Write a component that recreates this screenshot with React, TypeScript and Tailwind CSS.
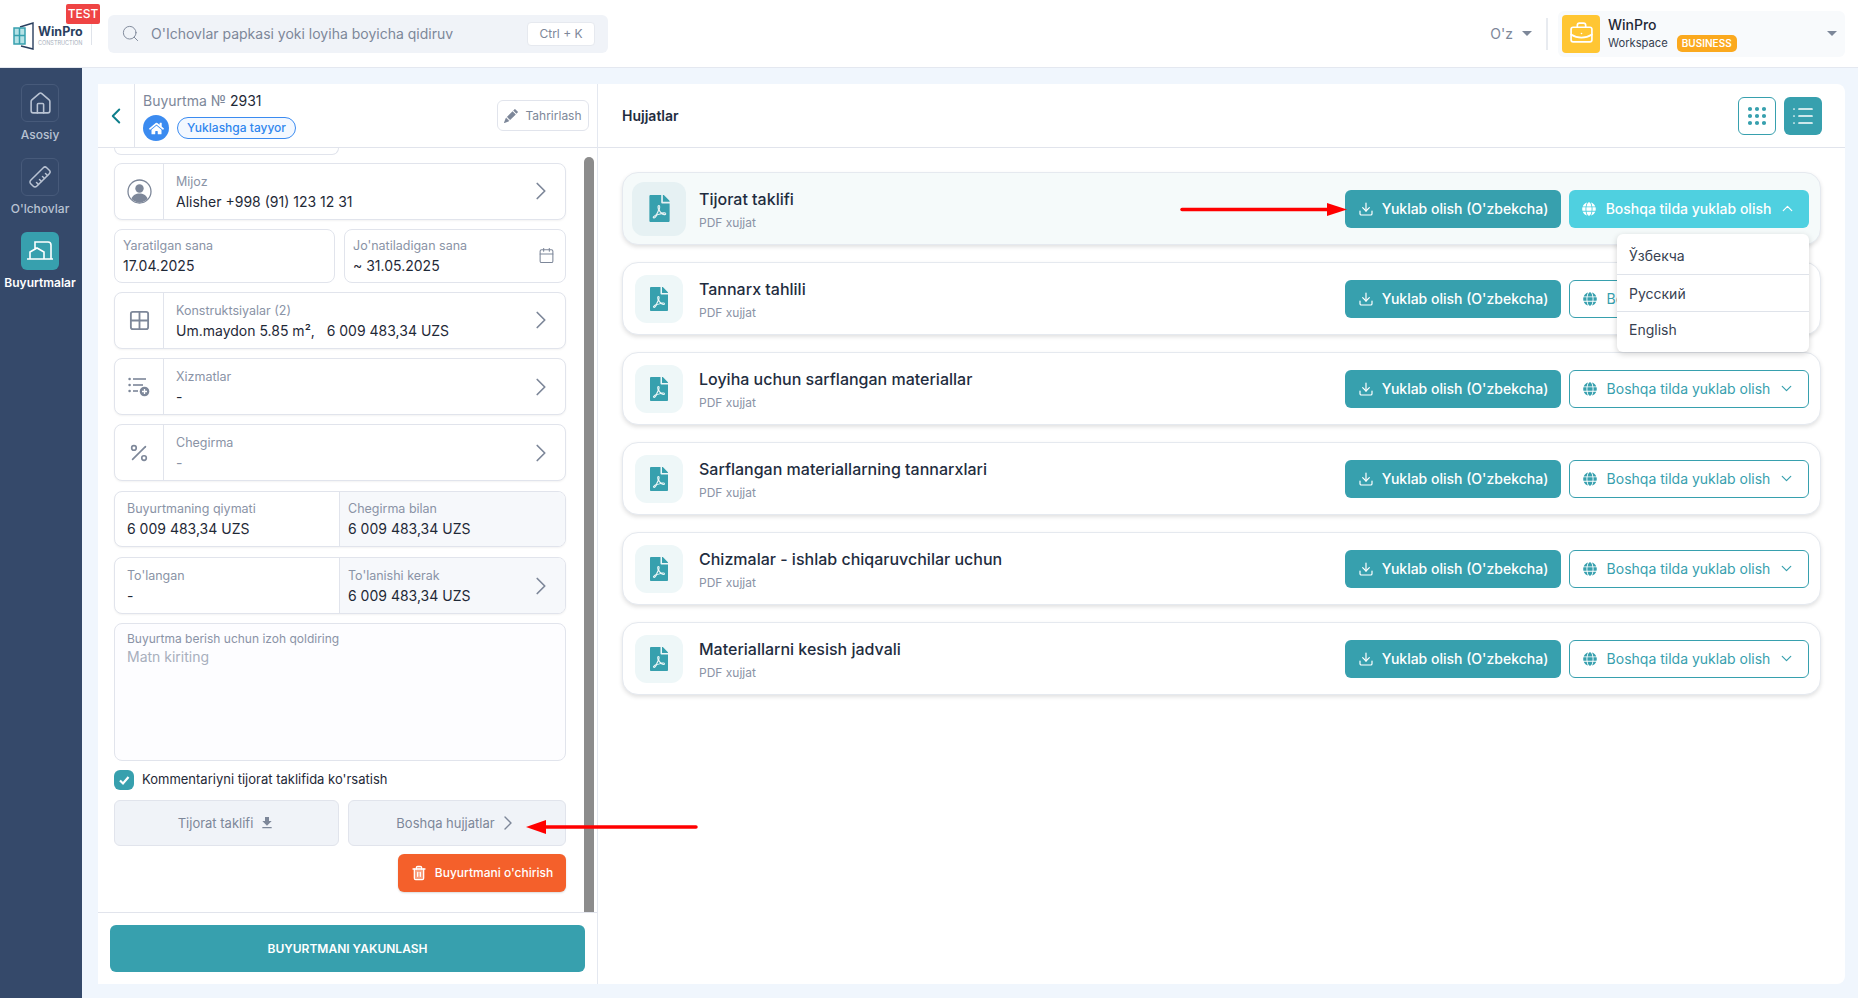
import type { ReactNode } from "react";
import {
  BriefcaseBusiness,
  Calendar,
  ChevronDown,
  ChevronLeft,
  ChevronRight,
  ChevronUp,
  Download,
  Grid2x2,
  Grip,
  House,
  List,
  Percent,
  Ruler,
  Search,
  Trash2,
} from "lucide-react";
import { BsPencilFill } from "react-icons/bs";
import { FaFilePdf, FaGlobe, FaHome } from "react-icons/fa";
import { MdFileDownload } from "react-icons/md";

const docs = [
  "Tijorat taklifi",
  "Tannarx tahlili",
  "Loyiha uchun sarflangan materiallar",
  "Sarflangan materiallarning tannarxlari",
  "Chizmalar - ishlab chiqaruvchilar uchun",
  "Materiallarni kesish jadvali",
];

function Logo() {
  return (
    <svg width="21" height="28" viewBox="0 0 21 28" fill="none">
      <path d="M7 5 20 1V27L8 24" stroke="#2a3f5f" strokeWidth="1.4" />
      <rect x="1" y="6" width="11" height="16" fill="#b5e2e6" stroke="#37a0ae" strokeWidth="1.5" />
      <path d="M6.5 6v16M1 13.5h11" stroke="#37a0ae" strokeWidth="1.5" />
    </svg>
  );
}

function Caret() {
  return <span className="block h-0 w-0 border-x-[5px] border-t-[5px] border-x-transparent border-t-[#7d8799]" />;
}

function Header() {
  return (
    <header className="flex h-[68px] shrink-0 items-center border-b border-[#e4e8f0] bg-white">
      <div className="relative flex h-full w-[108px] shrink-0 items-center">
        <div className="ml-[13px] mt-[5px] flex items-center gap-[4px]">
          <Logo />
          <div className="flex flex-col">
            <span className="text-[12.5px] font-bold leading-[14px] text-[#2a3f5f]">WinPro</span>
            <span className="text-[5.5px] leading-[8px] text-[#a8b0bd]">CONSTRUCTION</span>
          </div>
        </div>
        <span className="absolute left-[66px] top-[4px] flex h-[20px] w-[34px] items-center justify-center rounded-[2px] bg-[#ef4444] text-[12px] font-medium text-white">
          TEST
        </span>
        <span className="absolute left-[91px] top-[24px] h-[21px] w-px bg-[#dfe3ea]" />
      </div>
      <div className="flex h-[38px] w-[500px] items-center rounded-md bg-[#f0f3f8] pl-[13px] pr-[13px]">
        <Search size={19} strokeWidth={1.2} className="text-[#7d8799]" />
        <span className="ml-[11px] flex-1 text-[14px] text-[#7d8799]">O'Ichovlar papkasi yoki loyiha boyicha qidiruv</span>
        <span className="flex h-[24px] w-[68px] items-center justify-center rounded border border-[#e6e9ef] bg-white text-[12px] text-[#7d8799]">
          Ctrl + K
        </span>
      </div>
      <div className="ml-auto flex items-center">
        <span className="text-[14px] text-[#7d8799]">O'z</span>
        <span className="ml-[9px]"><Caret /></span>
        <span className="ml-[14px] h-[32px] w-[2px] bg-[#e8ebf0]" />
        <div className="ml-[10px] mr-[13px] flex h-[46px] w-[287px] items-center rounded-md bg-[#f8fafc] pl-[4px] pr-[8px]">
          <span className="flex h-[38px] w-[38px] items-center justify-center rounded bg-[#ffc633]">
            <BriefcaseBusiness size={25} strokeWidth={1.6} className="text-white" />
          </span>
          <div className="ml-[8px] flex flex-col">
            <span className="text-[14px] font-medium leading-[20px] text-[#1f2937]">WinPro</span>
            <div className="flex items-center">
              <span className="text-[11.2px] leading-[17px] text-[#374151]">Workspace</span>
              <span className="ml-[9px] rounded-[5px] bg-[#fba91e] px-[5px] text-[10px] font-semibold leading-[17px] text-white">
                BUSINESS
              </span>
            </div>
          </div>
          <span className="ml-auto"><Caret /></span>
        </div>
      </div>
    </header>
  );
}

function SideItem({ label, active, children }: { label: string; active?: boolean; children: ReactNode }) {
  return (
    <div className="flex flex-col items-center">
      <span
        className={
          active
            ? "flex h-[38px] w-[38px] items-center justify-center rounded-md bg-[#37a0ae] text-white"
            : "flex h-[38px] w-[38px] items-center justify-center rounded-md border border-[#475a7a] text-[#b9c3d3]"
        }
      >
        {children}
      </span>
      <span className={active ? "mt-[2.5px] text-[12px] font-semibold leading-[20px] text-white" : "mt-[2.5px] text-[12px] font-medium leading-[20px] text-[#b9c3d3]"}>
        {label}
      </span>
    </div>
  );
}

function Sidebar() {
  return (
    <aside className="flex w-[82px] shrink-0 flex-col gap-[13.5px] bg-[#35496a] pr-[2px] pt-[16px]">
      <SideItem label="Asosiy"><House size={25} strokeWidth={1.5} /></SideItem>
      <SideItem label="O'lchovlar"><Ruler size={24} strokeWidth={1.5} className="rotate-90" /></SideItem>
      <SideItem label="Buyurtmalar" active>
        <svg width="38" height="38" viewBox="0 0 38 38" fill="none" stroke="currentColor" strokeWidth="1.6">
          <path d="M6 27h26M9 27v-7l7-4 7 4v7M14 17v-7h13a3 3 0 0 1 3 3v14" />
        </svg>
      </SideItem>
    </aside>
  );
}

function Field({ label, value, muted }: { label: string; value: string; muted?: boolean }) {
  return (
    <div className="flex flex-col">
      <span className="text-[12.5px] leading-[20px] text-[#8a93a6]">{label}</span>
      <span className={muted ? "whitespace-pre text-[14px] leading-[20px] text-[#8a93a6]" : "whitespace-pre text-[14px] leading-[20px] text-[#1f2937]"}>{value}</span>
    </div>
  );
}

function CardArrow() {
  return <ChevronRight size={30} strokeWidth={1.4} className="text-[#7d8799]" />;
}

function RowCard({ icon, label, value, muted }: { icon: ReactNode; label: string; value: string; muted?: boolean }) {
  return (
    <div className="flex h-[56.8px] items-stretch rounded-lg border border-[#e1e4ec] bg-white shadow-[0_1px_2px_rgba(0,0,0,0.05)]">
      <span className="flex w-[49px] shrink-0 items-center justify-center border-r border-[#e1e4ec] text-[#7d8799]">{icon}</span>
      <div className="flex flex-1 items-center pl-[12px] pr-[9px]">
        <div className="flex-1 pt-[1px]"><Field label={label} value={value} muted={muted} /></div>
        <CardArrow />
      </div>
    </div>
  );
}

function SplitCard({ left, right, arrow }: { left: [string, string]; right: [string, string]; arrow?: boolean }) {
  return (
    <div className="flex h-[56.8px] items-stretch overflow-hidden rounded-lg border border-[#e1e4ec] bg-white shadow-[0_1px_2px_rgba(0,0,0,0.05)]">
      <div className="flex w-[225px] items-center border-r border-[#e1e4ec] pl-[12px] pt-[1px]">
        <Field label={left[0]} value={left[1]} />
      </div>
      <div className="flex flex-1 items-center bg-[#f6f8fb] pl-[8px] pr-[9px] pt-[1px]">
        <div className="flex-1"><Field label={right[0]} value={right[1]} /></div>
        {arrow && <CardArrow />}
      </div>
    </div>
  );
}

function PersonIcon() {
  return (
    <svg width="25" height="25" viewBox="0 0 25 25">
      <circle cx="12.5" cy="12.5" r="11.5" fill="none" stroke="currentColor" strokeWidth="1.3" />
      <circle cx="12.5" cy="9.5" r="4.2" fill="currentColor" />
      <path d="M4.5 20c1-4 4.5-5.5 8-5.5s7 1.5 8 5.5a11 11 0 0 1-16 0z" fill="currentColor" />
    </svg>
  );
}

function ServicesIcon() {
  return (
    <svg width="22" height="20" viewBox="0 0 22 20" fill="currentColor">
      <circle cx="1.6" cy="2" r="1.3" />
      <rect x="5" y="1.2" width="13" height="1.6" />
      <circle cx="1.6" cy="8" r="1.3" />
      <rect x="5" y="7.2" width="10" height="1.6" />
      <circle cx="1.6" cy="14" r="1.3" />
      <rect x="5" y="13.2" width="5" height="1.6" />
      <circle cx="16.5" cy="14.5" r="4.8" />
      <path d="M16.5 12v5M14 14.5h5" stroke="#fff" strokeWidth="1.3" />
    </svg>
  );
}

function LeftPanel() {
  return (
    <section className="flex w-[500px] shrink-0 flex-col border-r border-[#e4e8f0]">
      <div className="flex h-[64px] shrink-0 items-stretch border-b border-[#e1e4ec]">
        <span className="flex w-[37px] items-center justify-center border-r border-[#e1e4ec] text-[#0f7f8c]">
          <ChevronLeft size={26} strokeWidth={1.8} />
        </span>
        <div className="flex flex-col pl-[8px] pt-[6px]">
          <span className="text-[14px] leading-[22px] text-[#7d8799]">
            Buyurtma № <span className="text-[#1f2937]">2931</span>
          </span>
          <div className="mt-[3px] flex items-center gap-[8px]">
            <span className="flex h-[26px] w-[26px] items-center justify-center rounded-full bg-[#3b8bf0] text-white">
              <FaHome size={15} />
            </span>
            <span className="flex h-[22px] w-[119px] items-center justify-center rounded-full border border-[#3b8bf0] bg-[#f3f8ff] text-[12px] font-medium text-[#2f86ee]">
              Yuklashga tayyor
            </span>
          </div>
        </div>
        <div className="ml-auto flex items-center pr-[8px]">
          <span className="flex h-[31px] w-[92px] items-center justify-center gap-[7px] rounded-md border border-[#e1e4ec] text-[12px] text-[#7d8799]">
            <BsPencilFill size={14} />
            Tahrirlash
          </span>
        </div>
      </div>
      <div className="flex min-h-0 flex-1">
        <div className="w-[486px] shrink-0 overflow-hidden pl-[16px] pr-[18px]">
          <div className="h-[7px] w-[225px] rounded-b-lg border-x border-b border-[#e1e4ec]" />
          <div className="mt-[8px] flex flex-col gap-[9.4px]">
            <RowCard icon={<PersonIcon />} label="Mijoz" value="Alisher +998 (91) 123 12 31" />
            <div className="flex h-[53.4px] gap-[9px]">
              <div className="flex w-[221px] items-center rounded-lg border border-[#e1e4ec] pl-[8px]">
                <Field label="Yaratilgan sana" value="17.04.2025" />
              </div>
              <div className="flex w-[222px] items-center justify-between rounded-lg border border-[#e1e4ec] pl-[8px] pr-[10px]">
                <Field label="Jo'natiladigan sana" value="~ 31.05.2025" />
                <Calendar size={17} strokeWidth={1.5} className="text-[#7d8799]" />
              </div>
            </div>
            <RowCard icon={<Grid2x2 size={23} strokeWidth={1.9} />} label="Konstruktsiyalar (2)" value="Um.maydon 5.85 m²,   6 009 483,34 UZS" />
            <RowCard icon={<ServicesIcon />} label="Xizmatlar" value="-" />
            <RowCard icon={<Percent size={22} strokeWidth={1.8} />} label="Chegirma" value="-" muted />
            <SplitCard left={["Buyurtmaning qiymati", "6 009 483,34 UZS"]} right={["Chegirma bilan", "6 009 483,34 UZS"]} />
            <SplitCard left={["To'langan", "-"]} right={["To'lanishi kerak", "6 009 483,34 UZS"]} arrow />
            <div className="h-[138px] rounded-lg border border-[#e1e4ec] bg-[#fdfdff] pl-[12px] pt-[6px]">
              <p className="text-[12px] leading-[17px] text-[#8a93a6]">Buyurtma berish uchun izoh qoldiring</p>
              <p className="text-[14px] leading-[20px] text-[#a8afbd]">Matn kiriting</p>
            </div>
          </div>
          <div className="mt-[9px] flex items-center gap-[8px]">
            <span className="flex h-[20px] w-[20px] items-center justify-center rounded-md bg-[#37a0ae] text-white">
              <svg width="12" height="12" viewBox="0 0 12 12" fill="none" stroke="currentColor" strokeWidth="2.2">
                <path d="M2 6.5 5 9.5 10.5 3" />
              </svg>
            </span>
            <span className="text-[13px] text-[#1f2937]">Kommentariyni tijorat taklifida ko'rsatish</span>
          </div>
          <div className="mt-[10px] flex h-[46px] gap-[9px]">
            <span className="flex w-[225px] items-center justify-center gap-[6px] rounded-md border border-[#e1e4ec] bg-[#f0f3f8] pt-[1px] text-[13px] text-[#7d8799]">
              Tijorat taklifi
              <MdFileDownload size={16} />
            </span>
            <span className="flex flex-1 items-center justify-center gap-[1px] rounded-md border border-[#e1e4ec] bg-[#f0f3f8] pl-[2px] pt-[1px] text-[13px] text-[#7d8799]">
              Boshqa hujjatlar
              <ChevronRight size={24} strokeWidth={1.4} />
            </span>
          </div>
          <div className="mt-[8px] flex justify-end">
            <span className="flex h-[38px] w-[168px] items-center justify-center gap-[8px] rounded-md bg-[#f4602b] text-[12px] font-medium text-white shadow-[0_1px_2px_rgba(0,0,0,0.15)]">
              <Trash2 size={16} strokeWidth={1.9} className="fill-white/40" />
              Buyurtmani o'chirish
            </span>
          </div>
        </div>
        <div className="mt-[9px] w-[10px] rounded-t-full bg-[#8c8c8c]" />
      </div>
      <div className="flex h-[72px] shrink-0 items-start border-t border-[#e1e4ec] pl-[12px] pr-[12px] pt-[12px]">
        <span className="flex h-[47px] w-[475px] items-center justify-center rounded-md bg-[#37a0ae] text-[12px] font-semibold text-white">
          BUYURTMANI YAKUNLASH
        </span>
      </div>
    </section>
  );
}

function DocRow({ title, active }: { title: string; active: boolean }) {
  return (
    <div
      className={
        active
          ? "flex h-[73px] items-center rounded-2xl border border-[#e5e9ef] bg-[#f5fafa] pl-[9px] pr-[11px] shadow-[0_2px_4px_rgba(0,0,0,0.12)]"
          : "flex h-[73px] items-center rounded-2xl border border-[#e5e9ef] bg-white pl-[12px] pr-[11px] shadow-[0_2px_4px_rgba(0,0,0,0.12)]"
      }
    >
      <span
        className={
          active
            ? "flex h-[54px] w-[54px] items-center justify-center rounded-xl bg-[#e6f1f3] text-[#37a0ae]"
            : "flex h-[48px] w-[48px] items-center justify-center rounded-xl bg-[#eef7f8] text-[#37a0ae]"
        }
      >
        <FaFilePdf size={active ? 27 : 24} />
      </span>
      <div className={active ? "ml-[13px] flex flex-col pt-[2px]" : "ml-[16px] flex flex-col pt-[2px]"}>
        <span className="text-[16px] font-[550] leading-[24px] text-[#1f2d40]">{title}</span>
        <span className="mt-[2px] text-[12px] leading-[20px] text-[#8a93a6]">PDF xujjat</span>
      </div>
      <span className="ml-auto flex h-[38px] w-[216px] items-center justify-center gap-[8px] rounded-md bg-[#37a0ae] text-[14px] font-medium text-white">
        <Download size={16} strokeWidth={1.8} />
        Yuklab olish (O'zbekcha)
      </span>
      <span
        className={
          active
            ? "ml-[8px] flex h-[38px] w-[240px] items-center justify-center gap-[8px] rounded-md bg-[#4fd0e0] text-[14px] font-medium text-white"
            : "ml-[8px] flex h-[38px] w-[240px] items-center justify-center gap-[8px] rounded-md border border-[#37a0ae] bg-white text-[14px] text-[#37a0ae]"
        }
      >
        <FaGlobe size={14} />
        <span className="ml-[2px]">Boshqa tilda yuklab olish</span>
        {active ? <ChevronUp size={17} strokeWidth={1.7} /> : <ChevronDown size={17} strokeWidth={1.7} />}
      </span>
    </div>
  );
}

function LanguageMenu() {
  return (
    <div className="absolute right-[36px] top-[86px] flex w-[192px] flex-col rounded-md bg-white text-[14px] text-[#374151] shadow-[0_2px_6px_rgba(0,0,0,0.18)]">
      <span className="flex h-[41px] items-center border-b border-[#dfe3ea] pl-[12px] pt-[3px]">Ўзбекча</span>
      <span className="flex h-[37px] items-center border-b border-[#dfe3ea] pl-[12px]">Русский</span>
      <span className="flex h-[40px] items-center pb-[5px] pl-[12px]">English</span>
    </div>
  );
}

function RightPanel() {
  return (
    <section className="flex min-w-0 flex-1 flex-col">
      <div className="flex h-[64px] shrink-0 items-center border-b border-[#e1e4ec] pl-[24px] pr-[23px]">
        <span className="text-[14px] font-semibold text-[#1f2d40]">Hujjatlar</span>
        <span className="ml-auto flex h-[38px] w-[38px] items-center justify-center rounded-md border border-[#37a0ae] text-[#37a0ae]">
          <Grip size={24} strokeWidth={2.2} />
        </span>
        <span className="ml-[8px] flex h-[38px] w-[38px] items-center justify-center rounded-md bg-[#37a0ae] text-white">
          <List size={24} strokeWidth={1.7} />
        </span>
      </div>
      <div className="relative flex flex-col gap-[17px] pl-[24px] pr-[24px] pt-[24px]">
        {docs.map((doc, i) => (
          <DocRow key={doc} title={doc} active={i === 0} />
        ))}
        <LanguageMenu />
      </div>
    </section>
  );
}

export default function App() {
  return (
    <div className="relative flex h-[998px] w-[1858px] flex-col overflow-hidden bg-[#f0f6fd] [font-family:Inter,sans-serif]">
      <Header />
      <div className="flex min-h-0 flex-1">
        <Sidebar />
        <main className="flex min-w-0 flex-1 pb-[14px] pl-[16px] pr-[13px] pt-[16px]">
          <div className="flex min-w-0 flex-1 overflow-hidden rounded-r-lg bg-white">
            <LeftPanel />
            <RightPanel />
          </div>
        </main>
      </div>
      <svg className="absolute left-0 top-0" width="1858" height="998" fill="none" style={{ pointerEvents: "none" }}>
        <path d="M1182 209.5h155" stroke="#f00" strokeWidth="3.5" strokeLinecap="round" />
        <path d="M1347 209.5 1327 203v13z" fill="#f00" />
        <path d="M696 827H536" stroke="#f00" strokeWidth="3.5" strokeLinecap="round" />
        <path d="M526 827 546 820v14z" fill="#f00" />
      </svg>
    </div>
  );
}
